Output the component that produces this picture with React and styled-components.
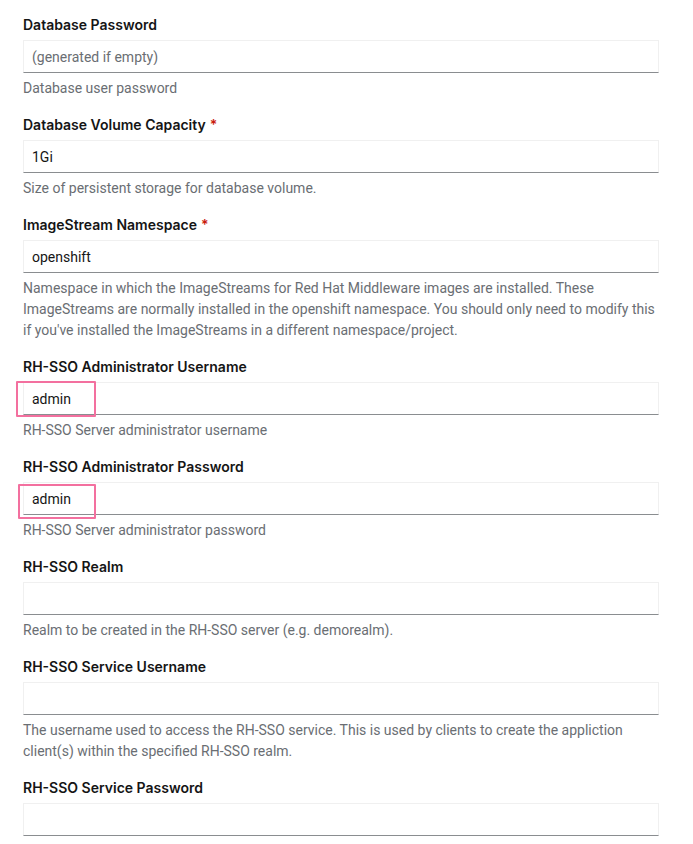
import React from 'react';
import styled, { createGlobalStyle } from 'styled-components';

const GlobalStyle = createGlobalStyle`
  body {
    margin: 0;
    background: #ffffff;
    font-family: Roboto, "Liberation Sans", sans-serif;
    color: #151515;
  }
`;

const Page = styled.div`
  padding: 14px 34px 40px 23px;
`;

const Form = styled.form`
  display: flex;
  flex-direction: column;
  gap: 15px;
  width: 636px;
`;

const Group = styled.div`
  display: flex;
  flex-direction: column;
`;

const Label = styled.label`
  font-family: Inter, Roboto, sans-serif;
  font-size: 14px;
  font-weight: 600;
  line-height: 21px;
  margin-bottom: 5px;
  color: #151515;
`;

const Required = styled.span`
  color: #c9190b;
  margin-left: 4px;
`;

const ControlWrap = styled.div`
  position: relative;
`;

const Input = styled.input`
  display: block;
  box-sizing: border-box;
  width: 100%;
  height: 33px;
  margin: 0;
  padding: 0 8px;
  font-family: inherit;
  font-size: 14px;
  color: #151515;
  background: #ffffff;
  border: 1px solid #f0f0f0;
  border-bottom-color: #8a8d90;
  border-radius: 0;
  outline: none;

  &::placeholder {
    color: #6a6e73;
  }
`;

const Highlight = styled.div`
  position: absolute;
  top: ${({ $top }) => $top}px;
  left: ${({ $left }) => $left}px;
  width: ${({ $width }) => $width}px;
  height: ${({ $height }) => $height}px;
  box-sizing: border-box;
  border: 2px solid #f3709f;
  border-radius: 1px;
  pointer-events: none;
`;

const Helper = styled.div`
  margin-top: 5px;
  font-size: 14px;
  line-height: 21px;
  color: #6a6e73;
`;

const fields = [
  {
    label: 'Database Password',
    placeholder: '(generated if empty)',
    helper: 'Database user password',
  },
  {
    label: 'Database Volume Capacity',
    required: true,
    value: '1Gi',
    helper: 'Size of persistent storage for database volume.',
  },
  {
    label: 'ImageStream Namespace',
    required: true,
    value: 'openshift',
    helper:
      "Namespace in which the ImageStreams for Red Hat Middleware images are installed. These ImageStreams are normally installed in the openshift namespace. You should only need to modify this if you've installed the ImageStreams in a different namespace/project.",
  },
  {
    label: 'RH-SSO Administrator Username',
    value: 'admin',
    helper: 'RH-SSO Server administrator username',
    mark: { top: -1, left: -7, width: 80, height: 36 },
  },
  {
    label: 'RH-SSO Administrator Password',
    value: 'admin',
    helper: 'RH-SSO Server administrator password',
    mark: { top: 2, left: -5, width: 78, height: 35 },
  },
  {
    label: 'RH-SSO Realm',
    value: '',
    helper: 'Realm to be created in the RH-SSO server (e.g. demorealm).',
  },
  {
    label: 'RH-SSO Service Username',
    value: '',
    helper:
      'The username used to access the RH-SSO service. This is used by clients to create the appliction client(s) within the specified RH-SSO realm.',
  },
  {
    label: 'RH-SSO Service Password',
    value: '',
  },
];

function Field({ field }) {
  return (
    <Group>
      <Label>
        {field.label}
        {field.required && <Required>*</Required>}
      </Label>
      <ControlWrap>
        <Input
          type="text"
          defaultValue={field.value}
          placeholder={field.placeholder}
        />
        {field.mark && (
          <Highlight
            $top={field.mark.top}
            $left={field.mark.left}
            $width={field.mark.width}
            $height={field.mark.height}
          />
        )}
      </ControlWrap>
      {field.helper && <Helper>{field.helper}</Helper>}
    </Group>
  );
}

export default function App() {
  return (
    <>
      <GlobalStyle />
      <Page>
        <Form onSubmit={(e) => e.preventDefault()}>
          {fields.map((f) => (
            <Field key={f.label} field={f} />
          ))}
        </Form>
      </Page>
    </>
  );
}
